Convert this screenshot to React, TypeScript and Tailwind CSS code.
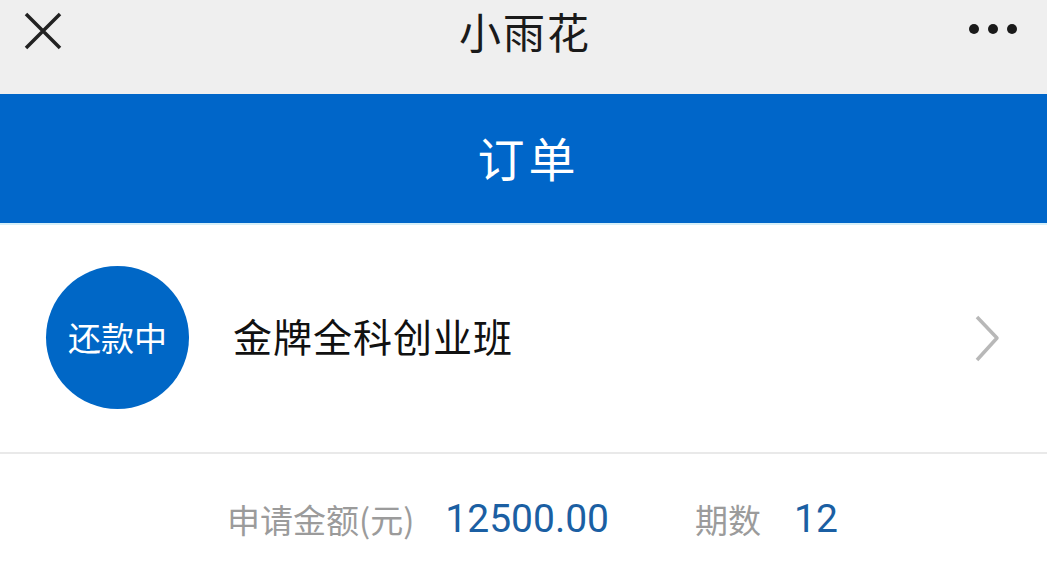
import React from "react";

const cjk = { fontFamily: '"Noto Sans CJK SC", "Noto Sans", sans-serif' };
const num = { fontFamily: 'Roboto, "Noto Sans", sans-serif' };

export default function App() {
  return (
    <div className="w-[1047px] h-[574px] overflow-hidden bg-white" style={cjk}>
      {/* top nav */}
      <div className="h-[94px] bg-[#efefef] px-[22px]">
        <div className="h-[62px] grid grid-cols-[1fr_auto_1fr] items-center">
          <svg width="42" height="42" viewBox="0 0 42 42">
            <path d="M4 4 L38 38 M38 4 L4 38" stroke="#222" strokeWidth="3.5" />
          </svg>
          <div className="text-[42px] leading-[60px] text-[#1a1a1a] tracking-[2px] pl-[3px]">小雨花</div>
          <div className="flex justify-end gap-[9px] mr-[8px] mt-[-4px]">
            <span className="w-[10px] h-[10px] rounded-full bg-[#1a1a1a]" />
            <span className="w-[10px] h-[10px] rounded-full bg-[#1a1a1a]" />
            <span className="w-[10px] h-[10px] rounded-full bg-[#1a1a1a]" />
          </div>
        </div>
      </div>

      {/* blue header */}
      <div className="h-[129px] bg-[#0066c9] flex items-center justify-center pl-[10px]">
        <span className="text-white text-[47px] tracking-[4px] mt-[-2px]">订单</span>
      </div>
      <div className="h-[2px] bg-[#d6eff8]" />

      {/* order row */}
      <div className="h-[229px] flex items-center px-[46px] border-b-2 border-[#e9e9e9]">
        <div className="w-[143px] h-[143px] rounded-full bg-[#0067c6] flex items-center justify-center mt-[-2px]">
          <span className="text-white text-[33px]">还款中</span>
        </div>
        <div className="ml-[44px] text-[39px] text-[#111] tracking-[1px] flex-1 mt-[-6px]">金牌全科创业班</div>
        <svg width="30" height="50" viewBox="0 0 30 50" className="mr-[-2px]">
          <path d="M4 3 L24 24 L4 46" fill="none" stroke="#b8b8b8" strokeWidth="3.5" strokeLinejoin="round" />
        </svg>
      </div>

      {/* summary */}
      <div className="flex items-center pl-[227px] pt-[36px]">
        <span className="text-[33px] text-[#9b9b9b]">申请金额(元)</span>
        <span className="ml-[31px] text-[39px] text-[#1b5fa3]" style={num}>12500.00</span>
        <span className="ml-[86px] text-[33px] text-[#9b9b9b]">期数</span>
        <span className="ml-[33px] text-[39px] text-[#1b5fa3]" style={num}>12</span>
      </div>
    </div>
  );
}
